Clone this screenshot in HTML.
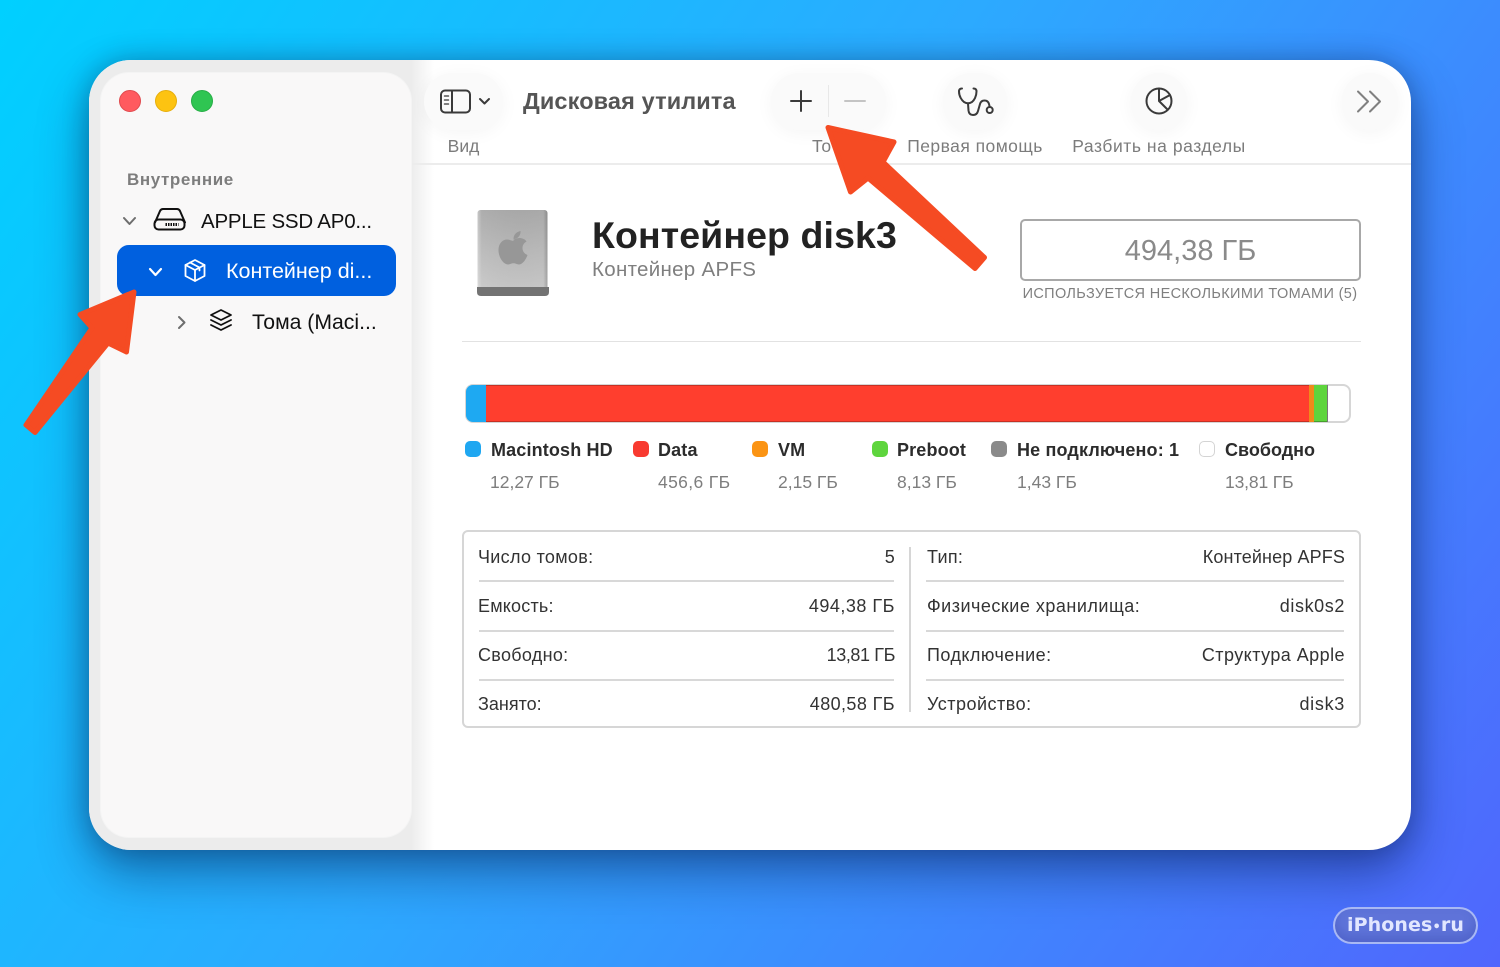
<!DOCTYPE html>
<html><head><meta charset="utf-8"><title>Дисковая утилита</title>
<style>
html,body{margin:0;padding:0}
body{width:1500px;height:967px;position:relative;overflow:hidden;background:linear-gradient(125deg,#00d0ff 0%,#2caaff 45%,#5066fd 100%);font-family:"Liberation Sans",sans-serif;color:#2b2b2b}
.t{position:absolute;white-space:nowrap;line-height:24px;height:24px}
.r{text-align:right}
.c{text-align:center}
#win{position:absolute;left:89px;top:60px;width:1322px;height:790px;border-radius:42px;background:#fff;box-shadow:0 24px 50px rgba(0,20,70,.42),0 0 26px rgba(0,20,60,.28);overflow:hidden}
#strip{position:absolute;left:89px;top:60px;width:345px;height:790px;border-radius:42px 0 0 42px;background:linear-gradient(90deg,#ececec 0,#ececec 322px,#fff 345px)}
#side{position:absolute;left:101px;top:73px;width:310px;height:764px;border-radius:28px;background:#f9f8f8;box-shadow:0 0 0 1px #f4f4f4}
.btn{position:absolute;background:#fafafa;border-radius:30px;box-shadow:0 3px 18px rgba(0,0,0,.045)}
.dot{position:absolute;width:22px;height:22px;border-radius:50%;box-sizing:border-box}
.sw{position:absolute;top:441px;width:16px;height:16px;border-radius:5px}
.lg{font-weight:bold;font-size:18px;color:#2c2c2c;top:438px;letter-spacing:.15px}
.sz{font-size:17.500px;color:#7e7e7e;top:470px}
.k{font-size:18px;color:#333;letter-spacing:.3px}
.hl{position:absolute;height:2px;background:#d8d8d8}
svg{position:absolute;overflow:visible}
</style></head><body>
<div id="win"></div><div id="strip"></div>
<div style="position:absolute;left:411px;top:163px;width:1000px;height:2px;background:#ececec"></div>
<div id="side"></div>

<div class="dot" style="left:119px;top:90px;background:#ff5a5f;border:1px solid #e04a4e"></div>
<div class="dot" style="left:155px;top:90px;background:#fdc311;border:1px solid #e6ae0c"></div>
<div class="dot" style="left:191px;top:90px;background:#2fc552;border:1px solid #27ad46"></div>

<div class="t" style="left:127px;top:168px;font-size:17px;font-weight:bold;color:#7d7d7d;letter-spacing:.6px">Внутренние</div>
<svg style="left:0;top:0" width="1500" height="967" fill="none" stroke-linecap="round" stroke-linejoin="round">
<path d="M124 218l5.500 6 5.500-6" stroke="#6e6e6e" stroke-width="2"/>
<g stroke="#111" stroke-width="2"><path d="M155 222.500l5-11.500q1-2 3-2h14q2 0 3 2l5 11.500"/><rect x="154.500" y="219.500" width="30" height="10" rx="4"/></g>
<path d="M165.500 224.500h13" stroke="#111" stroke-width="3" stroke-dasharray="1.500 1" stroke-linecap="butt"/>
</svg>
<div class="t" style="left:201px;top:210px;font-size:20.500px;color:#111;letter-spacing:-.22px">APPLE SSD AP0...</div>

<div style="position:absolute;left:117px;top:245px;width:279px;height:51px;border-radius:12px;background:#0060df"></div>
<svg style="left:0;top:0" width="1500" height="967" fill="none" stroke-linecap="round" stroke-linejoin="round">
<path d="M150 269l5.500 6 5.500-6" stroke="#fff" stroke-width="2.200"/>
<g stroke="#fff" stroke-width="1.800"><path d="M195 260l9.500 5v11l-9.500 5-9.500-5v-11z"/><path d="M185.500 265l9.500 5 9.500-5M195 270v11M190 262.500l9.500 5v3"/></g>
<path d="M179 317l5.500 5.500-5.500 5.500" stroke="#6e6e6e" stroke-width="2"/>
<g stroke="#111" stroke-width="1.800"><path d="M221 310l10 5-10 5-10-5z"/><path d="M211 320l10 5 10-5M211 325l10 5 10-5"/></g>
</svg>
<div class="t" style="left:226px;top:259px;font-size:21.500px;color:#fff;font-weight:500">Контейнер di...</div>
<div class="t" style="left:252px;top:311px;font-size:21.200px;color:#111">Тома (Maci...</div>

<!-- toolbar -->
<div class="btn" style="left:424px;top:73px;width:79px;height:57px"></div>
<svg style="left:0;top:0" width="1500" height="967" fill="none" stroke-linecap="round" stroke-linejoin="round">
<rect x="441" y="90.500" width="29" height="22" rx="4" stroke="#3a3a3a" stroke-width="2"/>
<path d="M452 91v21" stroke="#3a3a3a" stroke-width="2"/>
<path d="M444.500 96h4M444.500 100h4M444.500 104h4" stroke="#555" stroke-width="1.500"/>
<path d="M480 99l4.500 4.500 4.500-4.500" stroke="#3a3a3a" stroke-width="2"/>
</svg>
<div class="t c" style="left:424px;top:134px;width:79px;font-size:17.500px;color:#7c7c7c">Вид</div>
<div class="t" style="left:523px;top:89px;font-size:23.500px;font-weight:bold;color:#555;letter-spacing:.12px">Дисковая утилита</div>

<div class="btn" style="left:771px;top:73px;width:115px;height:57px"></div>
<div style="position:absolute;left:828px;top:85px;width:1px;height:32px;background:#e8e8e8"></div>
<div class="btn" style="left:943px;top:73px;width:64px;height:57px"></div>
<div class="btn" style="left:1131px;top:73px;width:56px;height:57px"></div>
<div class="btn" style="left:1342px;top:73px;width:56px;height:57px"></div>
<svg style="left:0;top:0" width="1500" height="967" fill="none" stroke-linecap="round" stroke-linejoin="round">
<path d="M801 91v20M791 101h20" stroke="#3a3a3a" stroke-width="2"/>
<path d="M845 101h20" stroke="#c4c4c4" stroke-width="2"/>
<g stroke="#3a3a3a" stroke-width="2"><path d="M962 88.500q-3 0-3 3c0 5 3 9 5 10.500q4 2.500 8 0c2-1.500 4.500-5.500 4.500-10.500q0-3-3-3"/><path d="M968 103.500l.5 7q.5 4.500 4.500 4.500 4 0 5-4l2-7q1-3.500 4.500-3.500 3.500 0 4.500 3.500l.5 2"/><circle cx="989.700" cy="110" r="3"/></g>
<g stroke="#3a3a3a" stroke-width="2"><circle cx="1159" cy="101" r="12.500"/><path d="M1159 88.500v12.500l8.500 8.500M1159 101l11-6"/></g>
<path d="M1358 91.500l10 10-10 10M1370 91.500l10 10-10 10" stroke="#808080" stroke-width="2"/>
</svg>
<div class="t" style="left:812px;top:134px;font-size:17.500px;color:#7c7c7c">То</div>
<div class="t c" style="left:895px;top:134px;width:160px;font-size:17.500px;color:#7c7c7c;letter-spacing:.45px">Первая помощь</div>
<div class="t c" style="left:1059px;top:134px;width:200px;font-size:17.500px;color:#7c7c7c;letter-spacing:.55px">Разбить на разделы</div>

<!-- header -->
<svg style="left:0;top:0" width="1500" height="967">
<defs>
<linearGradient id="g2" x1="0" y1="0" x2="0" y2="1"><stop offset="0" stop-color="#a9a9a9"/><stop offset=".5" stop-color="#b9b9b9"/><stop offset="1" stop-color="#c8c8c8"/></linearGradient>
<linearGradient id="g1" x1="0" y1="0" x2="1" y2="0"><stop offset="0" stop-color="#fff" stop-opacity=".35"/><stop offset=".06" stop-color="#fff" stop-opacity=".05"/><stop offset=".94" stop-color="#000" stop-opacity="0"/><stop offset="1" stop-color="#000" stop-opacity=".18"/></linearGradient>
</defs>
<rect x="477.500" y="210" width="70" height="82" rx="3" fill="url(#g2)"/>
<rect x="477.500" y="210" width="70" height="82" rx="3" fill="url(#g1)"/>
<path d="M477 287h72v5q0 4-4 4h-64q-4 0-4-4z" fill="#737373"/>
<path d="M513.500 241c-2.500 0-3.500-1.500-6.500-1.500-4.500 0-8.500 4-8.500 10.500 0 7.500 5 14.500 9.500 14.500 2 0 3-1.200 5.500-1.200s3.500 1.200 5.500 1.200c3.500 0 7-5 8.500-9.500-3.500-1.500-5-4-5-7 0-3 1.500-5 4-6.500-1.500-2.500-4.500-3.500-7-3.500-3 0-4.500 1.500-6 1.500zM513.500 239c0-4 2.500-7 7-8 .5 4.500-3 8-7 8z" fill="#979797"/>
</svg>
<div class="t" style="left:592px;top:213px;height:44px;line-height:44px;font-size:37.500px;font-weight:bold;color:#222;letter-spacing:.1px">Контейнер disk3</div>
<div class="t" style="left:592px;top:258px;font-size:20.500px;color:#7f7f7f;letter-spacing:.3px">Контейнер APFS</div>
<div style="position:absolute;left:1020px;top:219px;width:341px;height:62px;box-sizing:border-box;border:2px solid #a8a8a8;border-radius:5px"></div>
<div class="t c" style="left:1020px;top:231px;height:40px;line-height:40px;width:341px;font-size:29px;color:#8a8a8a">494,38 ГБ</div>
<div class="t c" style="left:1000px;top:282px;width:380px;font-size:14.500px;color:#7f7f7f;letter-spacing:.35px">ИСПОЛЬЗУЕТСЯ НЕСКОЛЬКИМИ ТОМАМИ (5)</div>
<div style="position:absolute;left:462px;top:341px;width:899px;height:1px;background:#e2e2e2"></div>

<!-- bar -->
<div style="position:absolute;left:465px;top:384px;width:886px;height:39px;box-sizing:border-box;border:2px solid #d6d6d6;border-radius:8px;background:#fff"></div>
<div style="position:absolute;left:466px;top:385px;width:20px;height:37px;background:#1ea9f2;border-radius:7px 0 0 7px"></div>
<div style="position:absolute;left:486px;top:385px;width:823px;height:37px;background:#ff3e2e;box-shadow:inset 0 1px rgba(0,0,0,.22),inset 0 -1px rgba(0,0,0,.22)"></div>
<div style="position:absolute;left:1309px;top:385px;width:5px;height:37px;background:#f08a1a"></div>
<div style="position:absolute;left:1314px;top:385px;width:13px;height:37px;background:#5ed53d;box-shadow:inset 0 -1px rgba(0,0,0,.25)"></div>
<div style="position:absolute;left:1327px;top:385px;width:1px;height:37px;background:#777"></div>

<div class="sw" style="left:465px;background:#1fa7f1"></div>
<div class="t lg" style="left:491px">Macintosh HD</div><div class="t sz" style="left:490px">12,27 ГБ</div>
<div class="sw" style="left:633px;background:#f83a30"></div>
<div class="t lg" style="left:658px">Data</div><div class="t sz" style="left:658px;letter-spacing:.35px">456,6 ГБ</div>
<div class="sw" style="left:752px;background:#fb9414"></div>
<div class="t lg" style="left:778px">VM</div><div class="t sz" style="left:778px">2,15 ГБ</div>
<div class="sw" style="left:872px;background:#5ed53d"></div>
<div class="t lg" style="left:897px">Preboot</div><div class="t sz" style="left:897px">8,13 ГБ</div>
<div class="sw" style="left:991px;background:#8a8a8a"></div>
<div class="t lg" style="left:1017px">Не подключено: 1</div><div class="t sz" style="left:1017px">1,43 ГБ</div>
<div class="sw" style="left:1199px;background:#fff;box-sizing:border-box;border:1.500px solid #d4d4d4"></div>
<div class="t lg" style="left:1225px;letter-spacing:0">Свободно</div><div class="t sz" style="left:1225px;letter-spacing:-.15px">13,81 ГБ</div>

<!-- table -->
<div style="position:absolute;left:462px;top:530px;width:899px;height:198px;box-sizing:border-box;border:2px solid #d6d6d6;border-radius:6px"></div>
<div style="position:absolute;left:909px;top:547px;width:2px;height:165px;background:#d6d6d6"></div>
<div class="hl" style="left:479px;top:580px;width:415px"></div><div class="hl" style="left:926px;top:580px;width:418px"></div>
<div class="hl" style="left:479px;top:630px;width:415px"></div><div class="hl" style="left:926px;top:630px;width:418px"></div>
<div class="hl" style="left:479px;top:679px;width:415px"></div><div class="hl" style="left:926px;top:679px;width:418px"></div>

<div class="t k" style="left:478px;top:545px">Число томов:</div><div class="t k r" style="left:694px;width:201px;top:545px">5</div>
<div class="t k" style="left:478px;top:594px;letter-spacing:.2px">Емкость:</div><div class="t k r" style="left:694px;width:201px;top:594px;letter-spacing:.5px">494,38 ГБ</div>
<div class="t k" style="left:478px;top:643px">Свободно:</div><div class="t k r" style="left:694px;width:201px;top:643px;letter-spacing:-.4px">13,81 ГБ</div>
<div class="t k" style="left:478px;top:692px;letter-spacing:0">Занято:</div><div class="t k r" style="left:694px;width:201px;top:692px;letter-spacing:.4px">480,58 ГБ</div>
<div class="t k" style="left:927px;top:545px">Тип:</div><div class="t k r" style="left:1144px;width:201px;top:545px;letter-spacing:.12px">Контейнер APFS</div>
<div class="t k" style="left:927px;top:594px;letter-spacing:.5px">Физические хранилища:</div><div class="t k r" style="left:1144px;width:201px;top:594px;letter-spacing:.6px">disk0s2</div>
<div class="t k" style="left:927px;top:643px;letter-spacing:.45px">Подключение:</div><div class="t k r" style="left:1144px;width:201px;top:643px;letter-spacing:.45px">Структура Apple</div>
<div class="t k" style="left:927px;top:692px;letter-spacing:.5px">Устройство:</div><div class="t k r" style="left:1144px;width:201px;top:692px;letter-spacing:.7px">disk3</div>

<!-- arrows -->
<svg style="left:0;top:0" width="1500" height="967">
<path d="M134 292L80 314.500L92 328L26 425L35 432.500L108 343L126.500 352Z" fill="#f54b23" stroke="#f54b23" stroke-width="5" stroke-linejoin="round"/>
<path d="M828 127.500L894 142L883 162L984.500 257.500L975 268.500L868 178L850.500 192Z" fill="#f54b23" stroke="#f54b23" stroke-width="5" stroke-linejoin="round"/>
</svg>

<!-- badge -->
<div style="position:absolute;left:1333px;top:907px;width:145px;height:37px;box-sizing:border-box;border:2px solid rgba(200,212,255,.7);border-radius:19px;background:rgba(96,116,215,.95);box-shadow:inset 0 -6px 10px rgba(50,65,170,.3)"></div>
<div class="t c" style="left:1333px;top:913px;width:145px;font-family:'DejaVu Sans','Liberation Sans',sans-serif;font-size:19px;font-weight:bold;color:#e2e7ff;letter-spacing:.1px">iPhones<span style="font-size:13px">•</span>ru</div>
</body></html>
